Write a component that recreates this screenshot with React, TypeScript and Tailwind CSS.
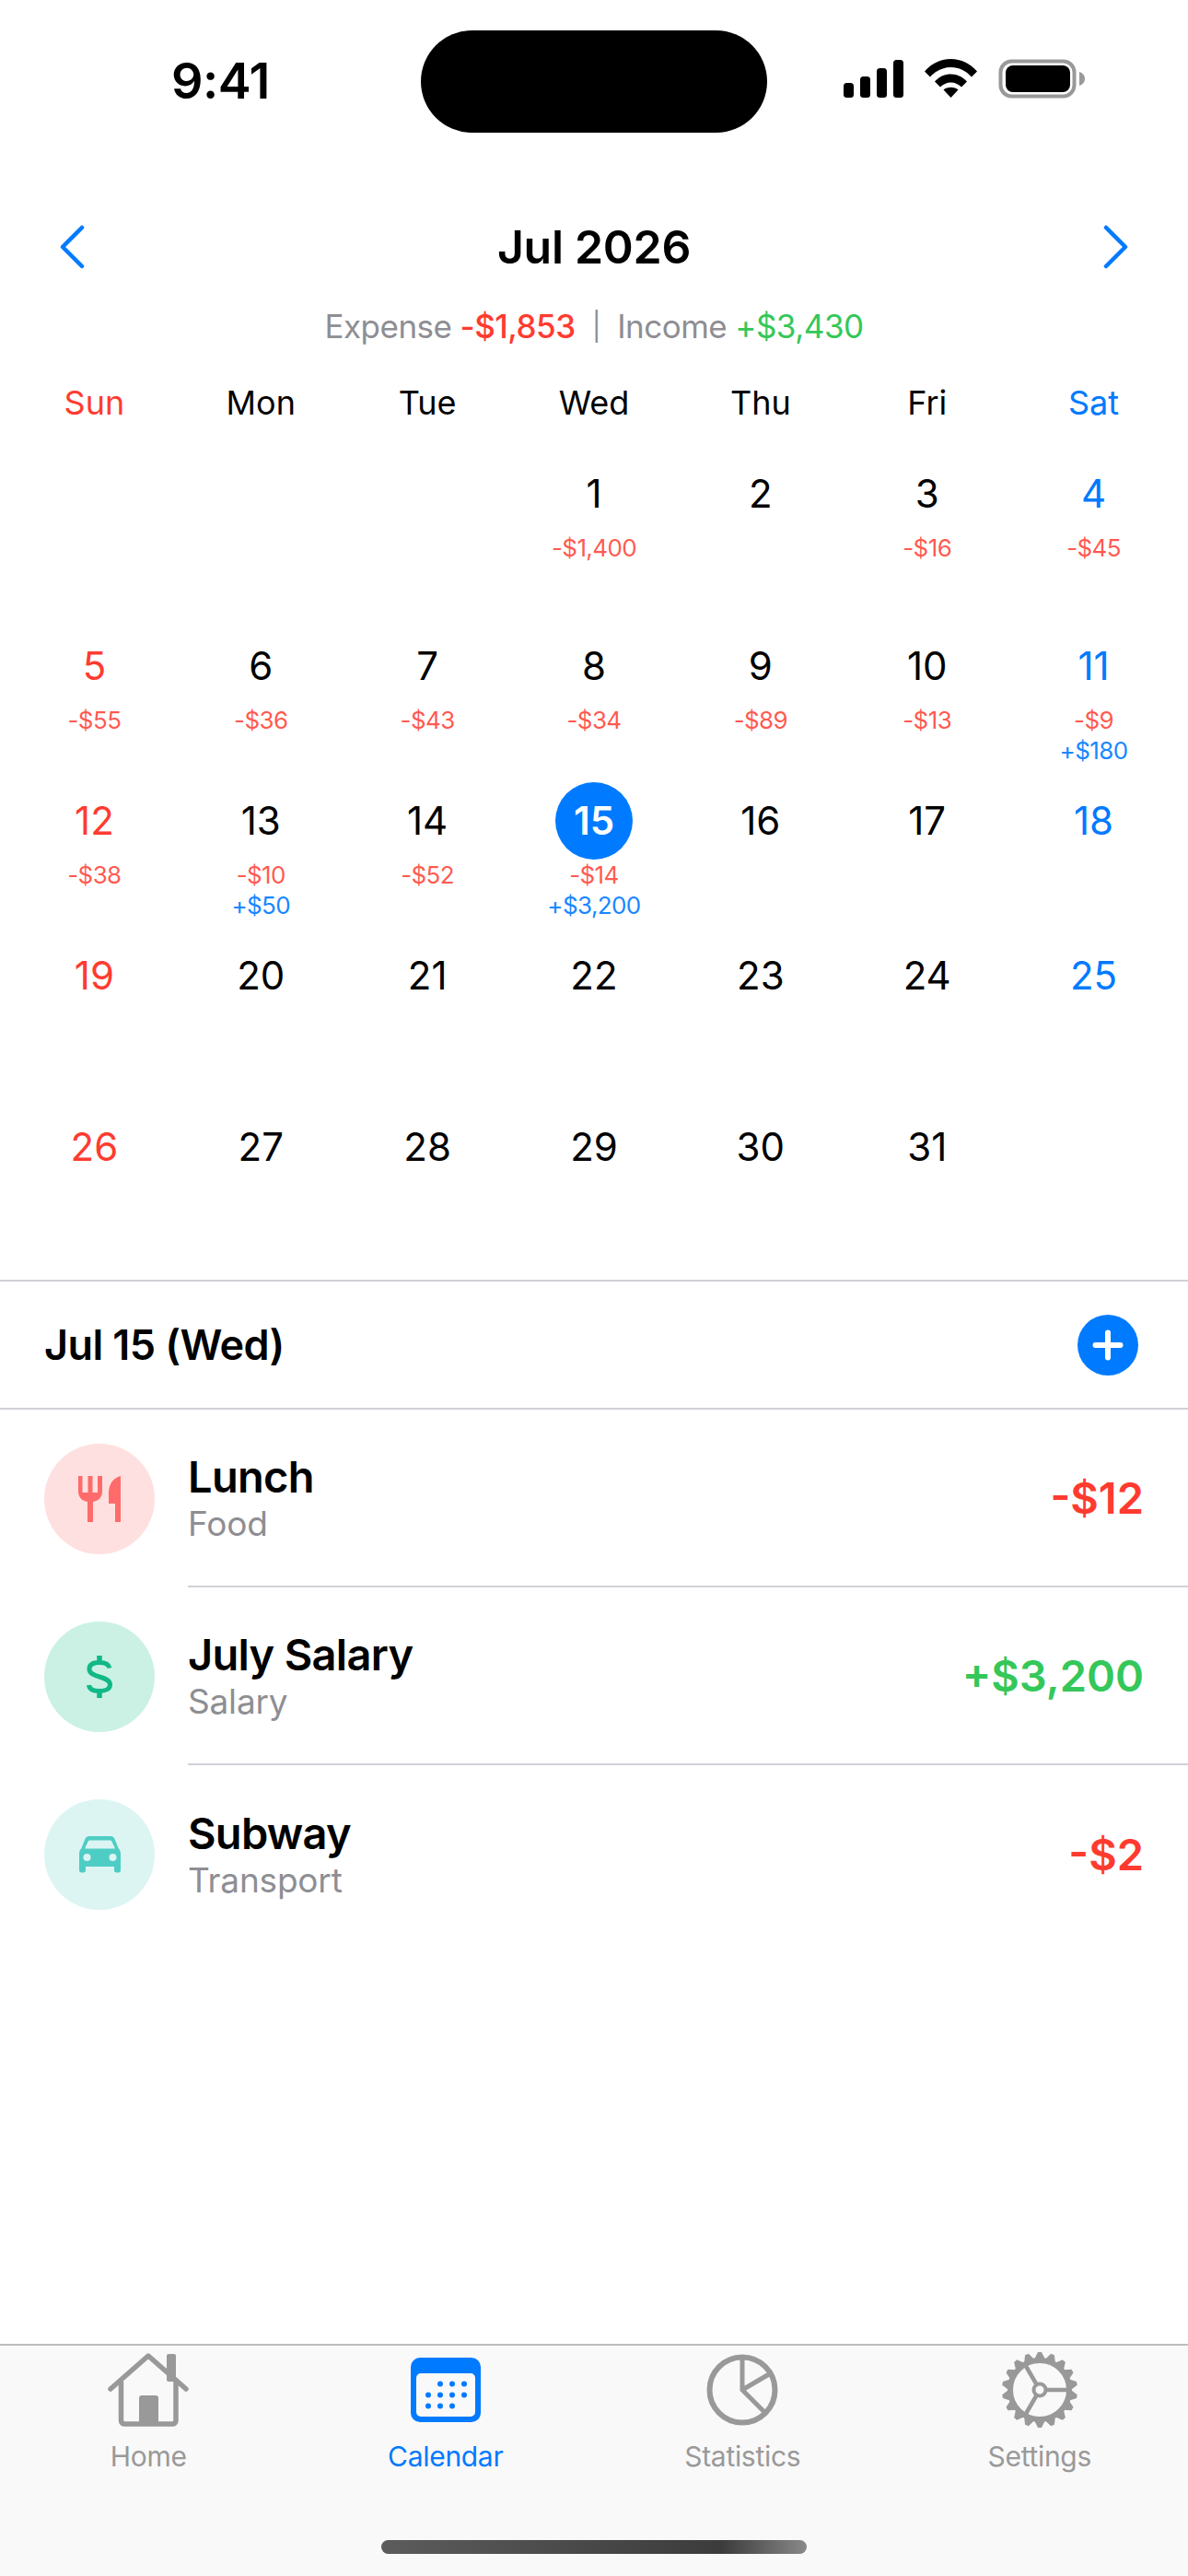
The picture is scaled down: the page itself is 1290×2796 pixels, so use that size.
const font = "font-['Inter',sans-serif]";

type Cell = { day?: number; expense?: string; income?: string };

const weeks: { height: string; cells: Cell[] }[] = [
  {
    height: "h-[187px]",
    cells: [
      {},
      {},
      {},
      { day: 1, expense: "-$1,400" },
      { day: 2 },
      { day: 3, expense: "-$16" },
      { day: 4, expense: "-$45" },
    ],
  },
  {
    height: "h-[168px]",
    cells: [
      { day: 5, expense: "-$55" },
      { day: 6, expense: "-$36" },
      { day: 7, expense: "-$43" },
      { day: 8, expense: "-$34" },
      { day: 9, expense: "-$89" },
      { day: 10, expense: "-$13" },
      { day: 11, expense: "-$9", income: "+$180" },
    ],
  },
  {
    height: "h-[168px]",
    cells: [
      { day: 12, expense: "-$38" },
      { day: 13, expense: "-$10", income: "+$50" },
      { day: 14, expense: "-$52" },
      { day: 15, expense: "-$14", income: "+$3,200" },
      { day: 16 },
      { day: 17 },
      { day: 18 },
    ],
  },
  {
    height: "h-[186px]",
    cells: [
      { day: 19 },
      { day: 20 },
      { day: 21 },
      { day: 22 },
      { day: 23 },
      { day: 24 },
      { day: 25 },
    ],
  },
  {
    height: "h-[186px]",
    cells: [
      { day: 26 },
      { day: 27 },
      { day: 28 },
      { day: 29 },
      { day: 30 },
      { day: 31 },
      {},
    ],
  },
];

const weekdays = ["Sun", "Mon", "Tue", "Wed", "Thu", "Fri", "Sat"];

function StatusBar() {
  return (
    <div className="flex h-[144px] pt-[33px]">
      <div className="flex h-[111px] w-[457px] items-center justify-center pl-[22px] pb-[2px]">
        <span className="text-[54px] font-semibold leading-none tracking-[-0.5px] text-black">9:41</span>
      </div>
      <div className="h-[111px] w-[376px] rounded-full bg-black" />
      <div className="flex h-[111px] items-center gap-[23px] pl-[83px] pb-[7px]">
        <svg width="65" height="41" viewBox="0 0 65 41" fill="black">
          <rect x="0" y="25" width="11" height="16" rx="3.5" />
          <rect x="18" y="18" width="11" height="23" rx="3.5" />
          <rect x="36" y="9" width="11" height="32" rx="3.5" />
          <rect x="54" y="0" width="11" height="41" rx="3.5" />
        </svg>
        <svg width="57" height="42" viewBox="0 0 57 42" fill="black">
          <path d="M0 13.5C7.5 5 17.5 0 28.5 0S49.500 5 57 13.5L51 19.500C45 13 37 9 28.500 9S12 13 6 19.500Z" />
          <path d="M11 24.500C15.500 19.500 21.500 16.500 28.500 16.500S41.500 19.500 46 24.500L40 30.500C37 27.500 33 25.500 28.500 25.500S20 27.500 17 30.500Z" />
          <path d="M20.500 33.500C22.500 31.800 25.300 30.800 28.500 30.800S34.500 31.800 36.500 33.500L28.500 42Z" />
        </svg>
        <svg width="94" height="43" viewBox="0 0 94 43">
          <rect x="2.500" y="2.500" width="80" height="38" rx="12" fill="none" stroke="#999999" strokeWidth="4" />
          <rect x="8" y="7" width="70" height="29" rx="8" fill="black" />
          <path d="M88 14C91.500 15 94 18 94 21.500S91.500 28 88 29Z" fill="#999999" />
        </svg>
      </div>
    </div>
  );
}

function MonthHeader() {
  return (
    <div className="mt-[80px] flex h-[88px] items-center justify-between px-[64px]">
      <svg width="28" height="48" viewBox="0 0 28 48" fill="none" stroke="#007aff" strokeWidth="4.500" strokeLinecap="round" strokeLinejoin="round">
        <path d="M25 3L4 24L25 45" />
      </svg>
      <span className="text-[50px] font-semibold leading-none tracking-[-0.3px] text-black">Jul 2026</span>
      <svg width="28" height="48" viewBox="0 0 28 48" fill="none" stroke="#007aff" strokeWidth="4.500" strokeLinecap="round" strokeLinejoin="round">
        <path d="M3 3L24 24L3 45" />
      </svg>
    </div>
  );
}

function Summary() {
  return (
    <div className="mt-[20px] flex h-[44px] items-center justify-center text-[35px] leading-none tracking-[-0.5px] text-[#8e8e93]">
      <span>Expense</span>
      <span className="ml-[9px] font-medium text-[#ff3b30]">-$1,853</span>
      <span className="mx-[18px] text-[30px]">|</span>
      <span>Income</span>
      <span className="ml-[9px] text-[#34c759]">+$3,430</span>
    </div>
  );
}

function dayColor(index: number) {
  if (index === 0) return "text-[#ff3b30]";
  if (index === 6) return "text-[#007aff]";
  return "text-black";
}

function Calendar() {
  return (
    <div className="px-3">
      <div className="mt-[31px] grid h-[60px] grid-cols-7 items-center">
        {weekdays.map((name, i) => (
          <div key={name} className={`text-center text-[36px] leading-none ${dayColor(i)}`}>
            {name}
          </div>
        ))}
      </div>
      <div className="mt-[27px]">
        {weeks.map((week, w) => (
          <div key={w} className={`grid grid-cols-7 ${week.height}`}>
            {week.cells.map((cell, i) => (
              <div key={i} className="flex flex-col items-center">
                {cell.day !== undefined && (
                  <>
                    {cell.day === 15 ? (
                      <div className="flex h-[84px] w-[84px] items-center justify-center rounded-full bg-[#007aff] text-[42px] font-semibold leading-none text-white">
                        15
                      </div>
                    ) : (
                      <div className={`flex h-[84px] w-[84px] items-center justify-center text-[42px] leading-none ${dayColor(i)}`}>
                        {cell.day}
                      </div>
                    )}
                    {cell.expense && <div className="text-[26px] leading-[33px] tracking-[-0.6px] text-[#ff3b30]/85">{cell.expense}</div>}
                    {cell.income && <div className="text-[26px] leading-[33px] tracking-[-0.6px] text-[#007aff]/90">{cell.income}</div>}
                  </>
                )}
              </div>
            ))}
          </div>
        ))}
      </div>
    </div>
  );
}

function ForkKnife() {
  return (
    <svg width="46" height="50" viewBox="0 0 46 50" fill="#ff6b6b">
      <path d="M0 0H4.500V18H10.500V0H15.500V18H21V0H26V17C26 23 22 27 16 28V50H10V28C4 27 0 23 0 17Z" />
      <path d="M46 0V50H40V30H33V19C33 9 38 2 46 0Z" />
    </svg>
  );
}

function Dollar() {
  return (
    <svg width="28" height="46" viewBox="0 0 28 46" fill="none" stroke="#12b886" strokeWidth="5" strokeLinecap="butt">
      <path d="M25 13.500C24 9 20 7.500 14 7.500C7 7.500 3 10 3 14.500C3 19 7 21 14 23C21 25 25.500 27 25.500 31.500C25.500 36 21 38.500 14 38.500C7 38.500 3 36.500 2.500 32" />
      <path d="M14 0V7M14 39V46" strokeWidth="5.500" />
    </svg>
  );
}

function Car() {
  return (
    <svg width="45" height="40" viewBox="0 0 45 40" fill="#4ecdc4">
      <path
        fillRule="evenodd"
        d="M11 0H34C36.500 0 38 1.500 39 4L42.500 13C44.300 15 45 17 45 19V37C45 38.700 44 39.500 42.500 39.500H40.500C39 39.500 38 38.700 38 37V33H7V37C7 38.700 6 39.500 4.500 39.500H2.500C1 39.500 0 38.700 0 37V19C0 17 .7 15 2.500 13L6 4C7 1.500 8.500 0 11 0ZM11.500 4.500C10.500 4.500 10 5 9.500 6L6 13.500H39L35.500 6C35 5 34.500 4.500 33.500 4.500ZM8.500 19A4 4 0 1 0 8.500 27A4 4 0 1 0 8.500 19ZM36.500 19A4 4 0 1 0 36.500 27A4 4 0 1 0 36.500 19Z"
      />
    </svg>
  );
}

const transactions = [
  { title: "Lunch", category: "Food", amount: "-$12", amountColor: "text-[#ff3b30]", circle: "bg-[#ffe0e0]", icon: <ForkKnife /> },
  { title: "July Salary", category: "Salary", amount: "+$3,200", amountColor: "text-[#34c759]", circle: "bg-[#cbf1e5]", icon: <Dollar /> },
  { title: "Subway", category: "Transport", amount: "-$2", amountColor: "text-[#ff3b30]", circle: "bg-[#dcf5f3]", icon: <Car /> },
];

function DayDetail() {
  return (
    <div>
      <div className="flex h-[141px] items-center justify-between border-y-2 border-[#d1d1d6] pl-[48px] pr-[54px]">
        <span className="text-[45px] font-semibold leading-none tracking-[-0.6px] text-black">Jul 15 (Wed)</span>
        <div className="flex h-[66px] w-[66px] items-center justify-center rounded-full bg-[#007aff]">
          <svg width="36" height="36" viewBox="0 0 36 36" stroke="white" strokeWidth="6" strokeLinecap="round">
            <path d="M18 4.500V31.500M4.500 18H31.500" />
          </svg>
        </div>
      </div>
      {transactions.map((t, i) => (
        <div key={t.title} className="flex items-center pl-[48px]">
          <div className={`flex h-[120px] w-[120px] shrink-0 items-center justify-center rounded-full ${t.circle}`}>
            {t.icon}
          </div>
          <div
            className={`ml-[36px] flex h-[193px] flex-1 items-center justify-between pr-[48px] ${
              i < transactions.length - 1 ? "border-b-2 border-[#d1d1d6]" : ""
            }`}
          >
            <div className="flex flex-col">
              <span className="text-[47px] font-semibold leading-[56px] tracking-[-0.7px] text-black">{t.title}</span>
              <span className="text-[37px] leading-[46px] tracking-[-0.2px] text-[#8e8e93]">{t.category}</span>
            </div>
            <span className={`text-[47px] font-semibold leading-none ${t.amountColor}`}>{t.amount}</span>
          </div>
        </div>
      ))}
    </div>
  );
}

function TabBar() {
  const tabs = [
    {
      label: "Home",
      color: "text-[#999999]",
      icon: (
        <svg width="88" height="80" viewBox="0 0 88 80" fill="none" stroke="#999999" strokeWidth="5.500" strokeLinecap="round" strokeLinejoin="round">
          <path d="M3 39L44 3L85 39" />
          <path d="M14.500 32V73C14.500 75.500 16 77 18.500 77H70C72.500 77 74 75.500 74 73V30" />
          <rect x="34" y="46" width="21" height="31" rx="3" fill="#999999" stroke="none" />
          <rect x="64" y="1" width="10" height="30" rx="2" fill="#999999" stroke="none" />
        </svg>
      ),
    },
    {
      label: "Calendar",
      color: "text-[#007aff]",
      icon: (
        <svg width="76" height="70" viewBox="0 0 76 70">
          <rect width="76" height="70" rx="10" fill="#007aff" />
          <rect x="6" y="17" width="64" height="47" rx="5" fill="#f9f9f9" />
          <g fill="#007aff">
            {[
              [30, 28],
              [43, 28],
              [56, 28],
              [17, 40],
              [30, 40],
              [43, 40],
              [56, 40],
              [17, 52],
              [30, 52],
              [43, 52],
            ].map(([x, y]) => (
              <circle key={`${x}-${y}`} cx={x + 2} cy={y + 0.5} r="3" />
            ))}
          </g>
        </svg>
      ),
    },
    {
      label: "Statistics",
      color: "text-[#999999]",
      icon: (
        <svg width="78" height="78" viewBox="0 0 78 78" fill="none" stroke="#999999" strokeWidth="6" strokeLinecap="round">
          <circle cx="39" cy="39" r="35.500" />
          <path d="M39 4V39L62 62M39 39L68 22" strokeWidth="5" />
        </svg>
      ),
    },
    {
      label: "Settings",
      color: "text-[#999999]",
      icon: (
        <svg width="86" height="84" viewBox="0 0 86 84" fill="none" stroke="#999999">
          <circle cx="43" cy="42" r="32" strokeWidth="6" />
          <circle cx="43" cy="42" r="6.500" strokeWidth="4" />
          <path d="M50 42H75M39.500 36L27 14.500M39.500 48L27 69.500" strokeWidth="4.500" />
          <g fill="#999999" stroke="none">
            {Array.from({ length: 18 }, (_, i) => (
              <path key={i} transform={`rotate(${i * 20} 43 42)`} d="M37 9L41 1H45L49 9Z" />
            ))}
          </g>
        </svg>
      ),
    },
  ];

  return (
    <div className="mt-auto h-[252px] border-t-2 border-[#bdbdbd] bg-[#f9f9f9]">
      <div className="grid grid-cols-4">
        {tabs.map((tab) => (
          <div key={tab.label} className="flex flex-col items-center">
            <div className="flex h-[96px] items-center justify-center">{tab.icon}</div>
            <span className={`mt-[6px] text-[30px] leading-[36px] tracking-[-0.3px] ${tab.color}`}>{tab.label}</span>
          </div>
        ))}
      </div>
      <div className="mt-[73px] flex justify-center">
        <div className="h-[15px] w-[462px] rounded-full bg-linear-to-r from-[#5c5c5c] via-[#3c3c3c] via-80% to-[#8a8a8a]" />
      </div>
    </div>
  );
}

export default function App() {
  return (
    <div className={`flex h-[2796px] w-[1290px] flex-col overflow-hidden bg-white ${font}`}>
      <StatusBar />
      <MonthHeader />
      <Summary />
      <Calendar />
      <DayDetail />
      <TabBar />
    </div>
  );
}
